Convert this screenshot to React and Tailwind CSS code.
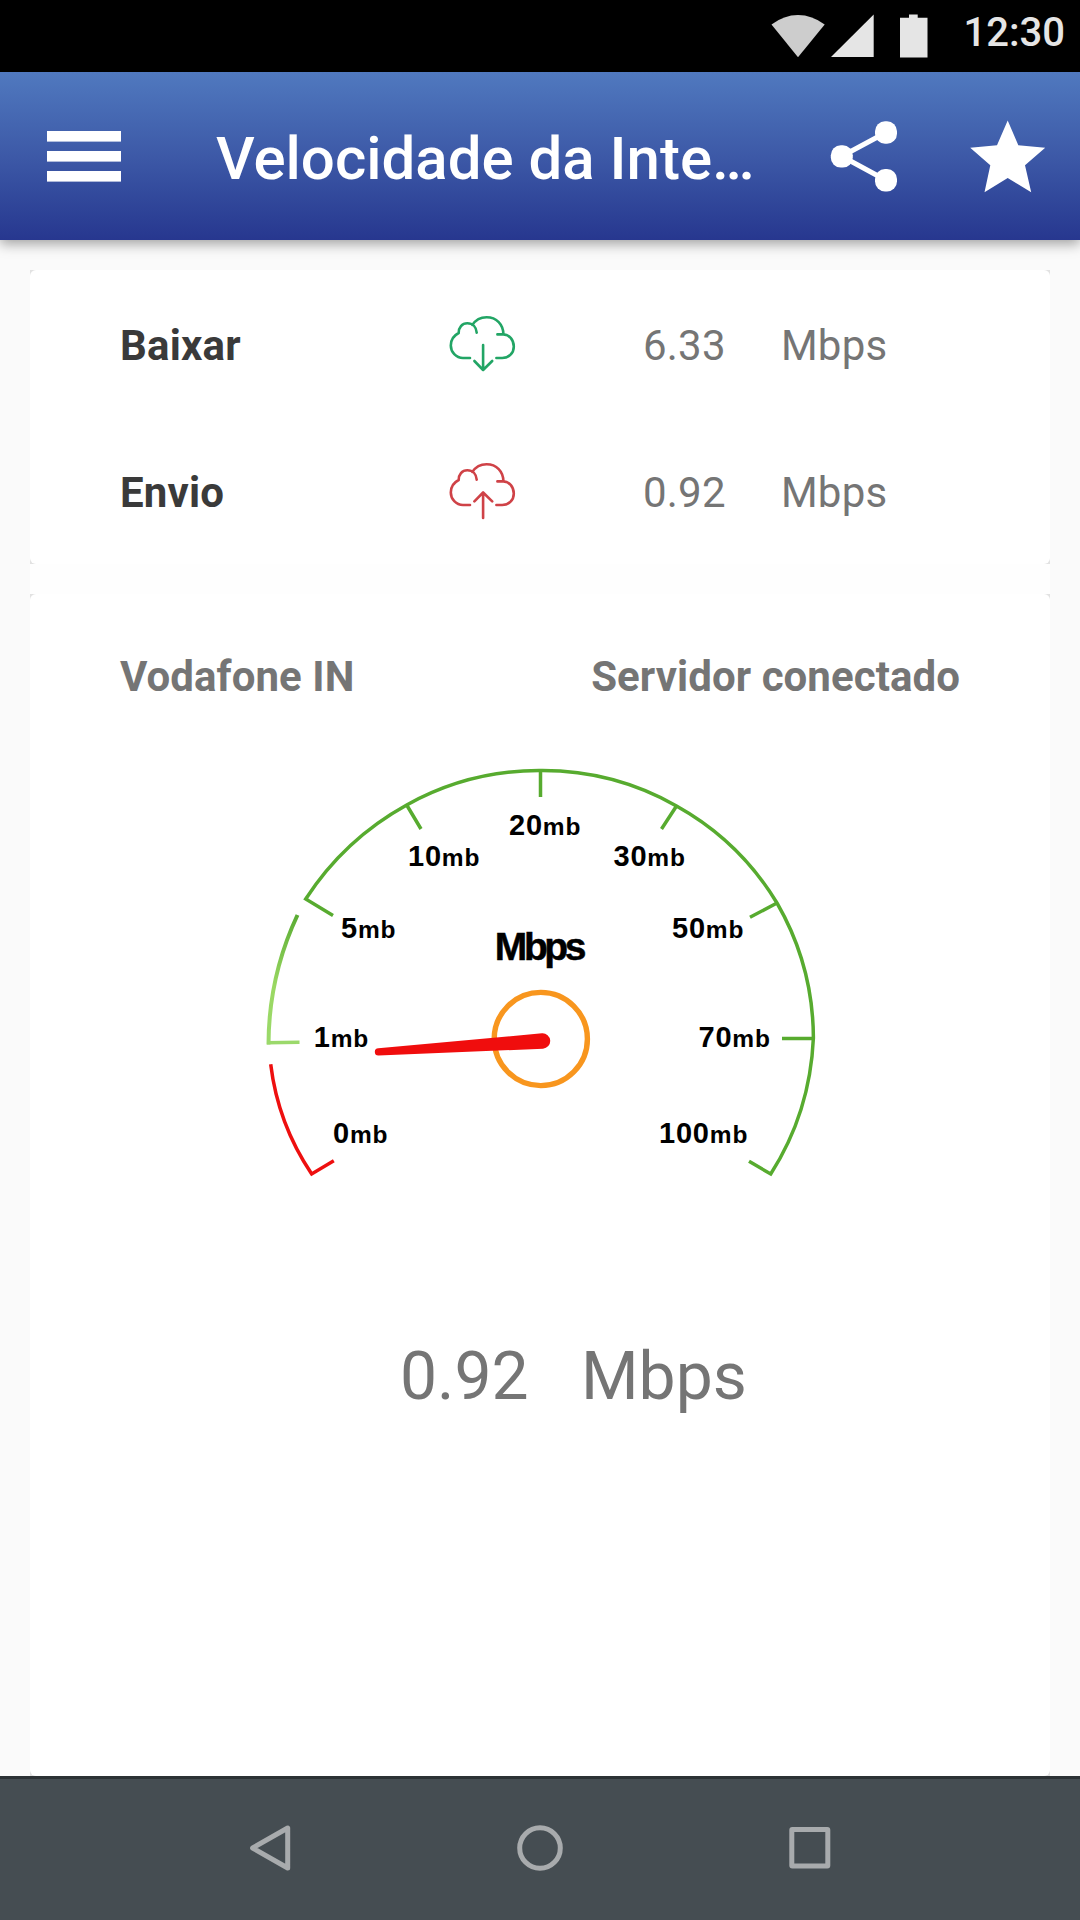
import React from 'react';

const cloudPath =
  'M470 358 H463 C456 358 450.8 352 450.8 345.5 C450.8 340 453.8 335.5 458.7 333 C458.6 327.5 462 323.3 467.3 323.3 C472.8 323.3 476.3 327 476.7 332.7 M472.3 325 C475.5 320 480.5 317.2 486.6 317.2 C496.5 317.2 503.4 324.5 503.4 334.4 M497.4 334.4 H503.4 C509.5 334.6 513.8 340 513.8 346.5 C513.8 353 509 358 502.2 358 H496.4';

const labels = [
  { value: '0', x: 333, y: 1143.3 },
  { value: '1', x: 313.7, y: 1046.5 },
  { value: '5', x: 341, y: 937.7 },
  { value: '10', x: 408, y: 866.3 },
  { value: '20', x: 509, y: 835 },
  { value: '30', x: 613.5, y: 866.3 },
  { value: '50', x: 672, y: 937.7 },
  { value: '70', x: 698.5, y: 1046.5 },
  { value: '100', x: 659, y: 1143.3 },
];

function CloudIcon({ color, arrow }) {
  return (
    <svg width="70" height="64" viewBox="448 312 70 64" fill="none" stroke={color} strokeWidth="2.6" strokeOpacity="0.92" strokeLinecap="round" strokeLinejoin="round">
      <path d={cloudPath} />
      <path d={arrow} />
    </svg>
  );
}

function StatusBar() {
  return (
    <div className="h-[72px] bg-black flex items-start justify-end pr-[15px]">
      <svg className="shrink-0" width="160" height="72" viewBox="768 0 160 72">
        <path d="M771.5 24.5 Q784 15 798 15 Q812 15 824.7 24.5 L798 57.3 Z" fill="#cdcdcd" />
        <path d="M831 57 L873.7 14.5 V57 Z" fill="#e5e5e5" />
        <path d="M900 17.7 H909 V14.5 H917.7 V17.7 H927.5 V57.5 H900 Z" fill="#e5e5e5" />
      </svg>
      <span className="ml-[36px] mt-[9px] text-[40px] leading-[47px] font-medium text-[#e5e5e5]">12:30</span>
    </div>
  );
}

function Header() {
  return (
    <header className="relative z-10 h-[168px] flex items-center bg-linear-to-b from-[#5079bf] via-[#3d59a7] to-[#27378f] shadow-[0_4px_12px_rgba(0,0,0,0.36)]">
      <svg className="ml-[47px] shrink-0" width="74" height="168" viewBox="47 72 74 168" fill="#fff">
        <rect x="47" y="131" width="74" height="10.6" />
        <rect x="47" y="151" width="74" height="10.6" />
        <rect x="47" y="171" width="74" height="10.6" />
      </svg>
      <h1 className="ml-[95px] w-[560px] pt-[5px] text-[60px] leading-[70px] font-medium text-white whitespace-nowrap">
        Velocidade da Inte…
      </h1>
      <svg className="ml-[50px] shrink-0" width="74" height="168" viewBox="826 72 74 168">
        <path d="M886 132.5 L841.7 156.3 L886 180.3" fill="none" stroke="#fff" strokeWidth="5" />
        <g fill="#fff">
          <rect x="875" y="121.3" width="22" height="22.4" rx="10" />
          <rect x="830.8" y="145.2" width="22" height="22.4" rx="10" />
          <rect x="875" y="169.1" width="22" height="22.4" rx="10" />
        </g>
      </svg>
      <svg className="ml-[68px] shrink-0" width="80" height="168" viewBox="968 72 80 168">
        <path
          d="M1007.7 120.5 L1018.3 145.2 L1045.2 147.7 L1025 165.3 L1031.2 192.2 L1007.7 178 L984.5 192.2 L990.3 165.3 L970.2 147.7 L997 145.2 Z"
          fill="#fff"
        />
      </svg>
    </header>
  );
}

function SpeedRow({ label, value, icon }) {
  return (
    <div className="h-[147px] flex items-start text-[42px] leading-[49px] tracking-[0.2px] text-[#757575]">
      <span className="w-[328px] font-bold text-[#3a3a3a]">{label}</span>
      <div className="w-[195px] -mt-[9px]">{icon}</div>
      <span className="w-[138px]">{value}</span>
      <span>Mbps</span>
    </div>
  );
}

function Gauge() {
  return (
    <svg className="ml-[220px] mt-[49px]" width="580" height="450" viewBox="250 750 580 450">
      <defs>
        <linearGradient id="low" x1="0" y1="0" x2="0" y2="1">
          <stop offset="0" stopColor="#5aac33" />
          <stop offset="0.55" stopColor="#9ad862" />
          <stop offset="1" stopColor="#9bd96b" />
        </linearGradient>
      </defs>

      {/* scale */}
      <g fill="none" strokeWidth="3.5">
        <g stroke="#57ab2f">
          <path d="M333 915.5 L305.7 899 A284 284 0 0 1 406.7 805 A272 272 0 0 1 540.5 770.6 A272 272 0 0 1 676.5 806 A272 272 0 0 1 777 903 A272 272 0 0 1 813.4 1038 A244 262 0 0 1 770.7 1174 L749 1161.3" />
          <path d="M406.7 805 L421 829 M540.5 770 V797 M676.5 806 L661.5 829 M777 903 L750 917.3 M813 1038.6 H782" />
        </g>
        <path d="M297.5 915 A306 306 0 0 0 268.5 1044.5" stroke="url(#low)" strokeWidth="4" />
        <path d="M267 1042.7 L299.5 1042.3" stroke="#9bd96b" />
        <path d="M270.7 1064.3 A250 250 0 0 0 311.7 1174 L333.8 1160.8" stroke="#ee0f0f" />
      </g>

      {labels.map((l) => (
        <text key={l.value} x={l.x} y={l.y} fontSize="29" letterSpacing="0.8" className="font-bold font-['Liberation_Sans',sans-serif]">
          {l.value}
          <tspan fontSize="24.5">mb</tspan>
        </text>
      ))}
      <text x="494.8" y="960" fontSize="39" letterSpacing="-3.4" className="font-bold font-['Liberation_Sans',sans-serif]" stroke="#000" strokeWidth="0.5">
        Mbps
      </text>

      {/* needle */}
      <circle cx="540.8" cy="1039" r="46.6" fill="none" stroke="#f8961e" strokeWidth="5.4" />
      <path d="M378.3 1048.3 L542 1033.3 A7.7 7.7 0 0 1 543 1048.7 L378.5 1055.5 A3.6 3.6 0 0 1 378.3 1048.3 Z" fill="#f00d0d" />
    </svg>
  );
}

function NavBar() {
  return (
    <div className="h-[144px] bg-[#454d52] border-t-[3px] border-[#2c3235] flex items-center justify-center pb-[3px]">
      <svg width="600" height="60" viewBox="240 1818 600 60" fill="none" stroke="#a8abad" strokeWidth="5" strokeLinejoin="round">
        <path d="M287.7 1828 V1868 L252.6 1848 Z" />
        <circle cx="540" cy="1848" r="20.3" />
        <rect x="791.8" y="1829.5" width="36" height="36.5" rx="0.5" />
      </svg>
    </div>
  );
}

export default function App() {
  return (
    <div className="w-[1080px] h-[1920px] flex flex-col bg-[#fafafa] overflow-hidden font-['Roboto',sans-serif]">
      <StatusBar />
      <Header />

      <main className="mx-[30px] mt-[30px] flex-1 flex flex-col gap-[30px] bg-[#fefefe]">
        {/* download / upload */}
        <section className="h-[294px] bg-[#e2e2e2]">
          <div className="h-full rounded-[6px] bg-white pl-[90px] pt-[51px]">
            <SpeedRow label="Baixar" value="6.33" icon={<CloudIcon color="#0f9d58" arrow="M483.1 345 V370 M474.4 361 L483.1 370 L492.2 361" />} />
            <SpeedRow label="Envio" value="0.92" icon={<CloudIcon color="#cb3237" arrow="M483.1 371 V345.5 M474.4 354.4 L483.1 345.5 L492.2 354.4" />} />
          </div>
        </section>

        {/* speed meter */}
        <section className="flex-1 bg-[#e2e2e2]">
          <div className="h-full rounded-[6px] bg-white pt-[58px]">
            <div className="px-[90px] flex justify-between text-[42px] leading-[49px] tracking-[0.07px] font-bold text-[#757575]">
              <span>Vodafone IN</span>
              <span>Servidor conectado</span>
            </div>
            <Gauge />
            <div className="mt-[138px] pl-[370px] flex text-[66px] leading-[77px] text-[#757575]">
              <span className="w-[181px]">0.92</span>
              <span>Mbps</span>
            </div>
          </div>
        </section>
      </main>

      <NavBar />
    </div>
  );
}
